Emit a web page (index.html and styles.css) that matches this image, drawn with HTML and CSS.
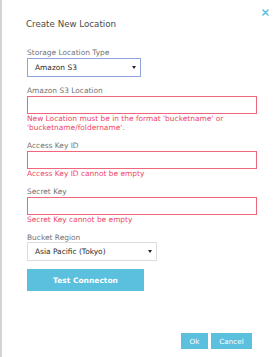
FILE: index.html
```html
<!DOCTYPE html>
<html lang="en">
<head>
    <meta charset="UTF-8">
    <meta name="viewport" content="width=device-width, initial-scale=1.0">
    <title>Create New Location</title>
    <link rel="stylesheet" href="styles.css">
</head>
<body>
    <div class="dialog">
        <a class="close" href="#" title="Close">
            <svg width="7" height="7" viewBox="0 0 7 7">
                <path d="M1 1L6 6M6 1L1 6" stroke="#5bc0de" stroke-width="1.6" stroke-linecap="round"/>
            </svg>
        </a>

        <h1>Create New Location</h1>

        <div class="field first">
            <label>Storage Location Type</label>
            <div class="select focused">
                <span>Amazon S3</span>
                <span class="arrow"></span>
            </div>
        </div>

        <div class="field">
            <label for="location">Amazon S3 Location</label>
            <input type="text" id="location" class="invalid">
            <p class="error">New Location must be in the format 'bucketname' or 'bucketname/foldername'.</p>
        </div>

        <div class="field">
            <label for="access-key">Access Key ID</label>
            <input type="text" id="access-key" class="invalid">
            <p class="error">Access Key ID cannot be empty</p>
        </div>

        <div class="field">
            <label for="secret-key">Secret Key</label>
            <input type="text" id="secret-key" class="invalid">
            <p class="error">Secret Key cannot be empty</p>
        </div>

        <div class="field">
            <label>Bucket Region</label>
            <div class="select region">
                <span>Asia Pacific (Tokyo)</span>
                <span class="arrow"></span>
            </div>
        </div>

        <button type="button" class="test-btn">Test Connecton</button>

        <div class="footer">
            <button type="button" class="btn ok">Ok</button>
            <button type="button" class="btn">Cancel</button>
        </div>
    </div>
</body>
</html>
```

FILE: styles.css
```css
body {
    margin: 0;
    background: #fff;
    font-family: "DejaVu Sans", Verdana, sans-serif;
}

.dialog {
    position: relative;
    box-sizing: border-box;
    height: 357px;
    padding: 19px 25px 8px 25px;
    border-left: 2px solid #d4d4d4;
    display: flex;
    flex-direction: column;
}

.close {
    position: absolute;
    top: 9px;
    right: 11px;
    line-height: 0;
}

h1 {
    margin: 0 0 0 -1px;
    font-size: 8.7px;
    line-height: 11px;
    font-weight: normal;
    color: #4a4a4a;
}

.field {
    margin-top: 8.5px;
}

.field.first {
    margin-top: 18px;
}

label {
    display: block;
    font-size: 7.45px;
    line-height: 9px;
    color: #747474;
    margin-bottom: 1px;
}

.select {
    box-sizing: border-box;
    height: 19px;
    width: 114px;
    display: flex;
    align-items: center;
    justify-content: space-between;
    padding: 0 4px 0 7px;
    border: 1px solid #dcdcdc;
    font-size: 7.45px;
    color: #2a2a2a;
}

.select.focused {
    border-color: #8fa4dc;
}

.select.region {
    width: 130px;
    margin-top: -1px;
}

.arrow {
    width: 0;
    height: 0;
    border-left: 2px solid transparent;
    border-right: 2px solid transparent;
    border-top: 3px solid #222;
}

input[type="text"] {
    display: block;
    box-sizing: border-box;
    width: 230px;
    height: 18px;
    margin: 0;
    padding: 0 6px;
    border: 1px solid #f2667c;
    outline: none;
}

.error {
    margin: 0;
    font-size: 7.45px;
    line-height: 9.6px;
    color: #ef4768;
}

.test-btn {
    margin-top: 8px;
    width: 117px;
    height: 22px;
    border: none;
    background: #5bc0de;
    color: #fff;
    font-family: inherit;
    font-weight: bold;
    font-size: 7.5px;
    padding: 0;
    cursor: pointer;
}

.footer {
    margin-top: auto;
    margin-right: 3px;
    display: flex;
    justify-content: flex-end;
    gap: 3px;
}

.btn {
    height: 16px;
    width: 41px;
    border: none;
    padding: 0;
    background: #5bc0de;
    color: #fff;
    font-family: inherit;
    font-size: 7.2px;
    cursor: pointer;
}

.btn.ok {
    width: 27px;
}
```
